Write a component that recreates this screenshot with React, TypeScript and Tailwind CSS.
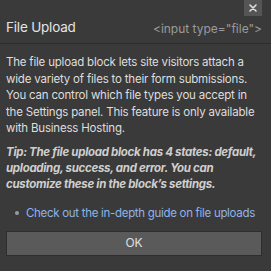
import React from "react";

export default function App() {
  return (
    <div
      className="w-[271px] h-[271px] bg-[#3a3a3a] text-[#dcdcdc] overflow-hidden relative"
      style={{ fontFamily: "Inter, 'Noto Sans', sans-serif" }}
    >
      <button className="absolute left-[244px] top-0 w-[18px] h-[16px] bg-[#555555] flex items-center justify-center">
        <svg width="8" height="8" viewBox="0 0 8 8">
          <path d="M1 1L7 7M7 1L1 7" stroke="#e0e0e0" strokeWidth="1.6" strokeLinecap="round" />
        </svg>
      </button>
      <div className="flex items-end justify-between pl-[6px] pr-[9px] pt-[19px] pb-[7px] border-b border-[#2c2c2c]">
        <span className="text-[13.5px] leading-[17px] tracking-[-0.2px] text-[#e4e4e4]">File Upload</span>
        <span className="text-[12px] leading-[15px] text-[#9a9a9a]">&lt;input type="file"&gt;</span>
      </div>
      <div className="pl-[6px] pr-[6px] pt-[10px]">
        <p className="text-[11.5px] leading-[16.6px] tracking-[-0.2px] text-[#dedede] whitespace-nowrap">
          The file upload block lets site visitors attach a<br />
          wide variety of files to their form submissions.<br />
          You can control which file types you accept in<br />
          the Settings panel. This feature is only available<br />
          with Business Hosting.
        </p>
        <p className="mt-[7px] text-[11.5px] leading-[16px] tracking-[-0.3px] font-bold italic text-[#cfcfcf] whitespace-nowrap">
          Tip: The file upload block has 4 states: default,<br />
          uploading, success, and error. You can<br />
          customize these in the block’s settings.
        </p>
        <div className="mt-[13px] flex items-center text-[11.5px] leading-[16px] tracking-[-0.3px]">
          <span className="w-[4px] h-[4px] rounded-full bg-[#9a9a9a] ml-[9px] mr-[7px] shrink-0" />
          <span className="text-[#8fb4e6] whitespace-nowrap">Check out the in-depth guide on file uploads</span>
        </div>
        <button className="mt-[10px] w-[256px] h-[25px] bg-[#5a5a5a] border border-[#2e2e2e] text-[12px] text-[#e0e0e0]">
          OK
        </button>
      </div>
    </div>
  );
}
